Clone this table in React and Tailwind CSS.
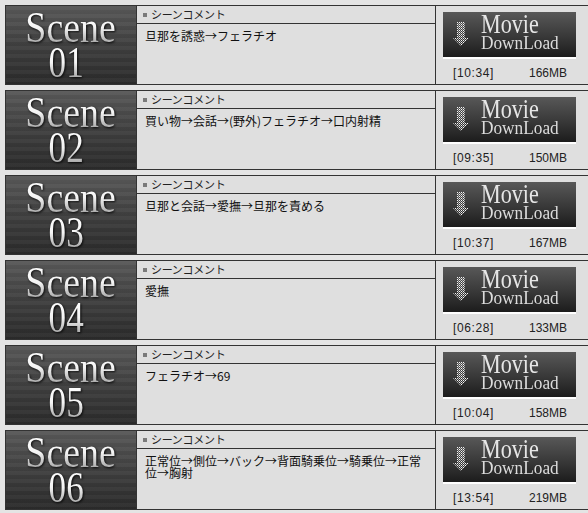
import React from 'react';

const scenes = [
    { no: '01', comment: '旦那を誘惑→フェラチオ', time: '10:34', size: '166MB' },
    { no: '02', comment: '買い物→会話→(野外)フェラチオ→口内射精', time: '09:35', size: '150MB' },
    { no: '03', comment: '旦那と会話→愛撫→旦那を責める', time: '10:37', size: '167MB' },
    { no: '04', comment: '愛撫', time: '06:28', size: '133MB' },
    { no: '05', comment: 'フェラチオ→69', time: '10:04', size: '158MB' },
    { no: '06', comment: '正常位→側位→バック→背面騎乗位→騎乗位→正常位→胸射', time: '13:54', size: '219MB' },
];

const DownArrow = ({ id }) => (
    <svg width="16" height="24" viewBox="0 0 16 24" className="shrink-0">
        <defs>
            <pattern id={id} width="2" height="2" patternUnits="userSpaceOnUse">
                <rect width="1" height="1" fill="#f4f4f4" />
                <rect x="1" y="1" width="1" height="1" fill="#b0b0b0" />
            </pattern>
        </defs>
        <rect x="4" y="0" width="8" height="16" fill={`url(#${id})`} />
        <polygon points="0,16 16,16 8,24" fill={`url(#${id})`} />
    </svg>
);

const SceneRow = ({ scene }) => {
    return (
        <div className="flex h-[80px] w-[584px] border border-[#333] bg-[#dfdfdf] mb-[5px]">
            {/* scene title panel */}
            <div className="w-[130px] shrink-0 bg-[repeating-linear-gradient(to_bottom,rgba(255,255,255,0.03)_0px,rgba(255,255,255,0.03)_4px,rgba(0,0,0,0.04)_4px,rgba(0,0,0,0.04)_8px),linear-gradient(to_bottom,#595959,#3e3e3e_55%,#2b2b2b)] pt-[4px] flex flex-col items-center font-['Liberation_Serif',serif] text-[44px] leading-[35px]">
                <span className="scale-x-[0.86] bg-gradient-to-b from-white via-[#f4f4f4] to-[#a0a0a0] bg-clip-text text-transparent drop-shadow-[1px_1px_1px_rgba(0,0,0,0.9)]">
                    Scene
                </span>
                <span className="scale-x-[0.8] bg-gradient-to-b from-white via-[#f4f4f4] to-[#a0a0a0] bg-clip-text text-transparent drop-shadow-[1px_1px_1px_rgba(0,0,0,0.9)] pr-[12px]">
                    {scene.no}
                </span>
            </div>

            {/* comment */}
            <div className="w-[300px] shrink-0 border-l border-r border-[#333] flex flex-col">
                <div className="h-[18px] border-b border-[#333] flex items-center pl-[6px] text-[11px] text-[#222] tracking-[-0.3px] font-['Noto_Sans_CJK_JP',sans-serif]">
                    <span className="w-[4px] h-[4px] bg-[#7a7a7a] mr-[4px]" />
                    シーンコメント
                </div>
                <div className="pl-[8px] pr-[12px] pt-[6px] text-[12px] leading-[12px] text-[#111] font-['Noto_Sans_CJK_JP',sans-serif]">
                    {scene.comment}
                </div>
            </div>

            {/* download */}
            <div className="flex-1 pt-[6px] pl-[7px] pr-[4px]">
                <div className="w-[133px] h-[47px] border-b-2 border-white bg-[linear-gradient(to_bottom,#585858,#383838_55%,#1c1c1c)] flex items-start">
                    <div className="ml-[10px] mt-[10px]">
                        <DownArrow id={`dots-${scene.no}`} />
                    </div>
                    <div className="ml-[12px] flex flex-col font-['Liberation_Serif',serif] text-[#e6e6e6]">
                        <span className="pt-[2px] text-[27px] leading-[20px] scale-x-[0.82] origin-left">Movie</span>
                        <span className="mt-[1px] text-[18px] leading-[17px] scale-x-[0.96] origin-left text-[#dcdcdc]">DownLoad</span>
                    </div>
                </div>
                <div className="w-[133px] mt-[8px] pl-[10px] pr-[9px] flex justify-between text-[12px] leading-[12px] text-[#222] font-['Liberation_Sans',sans-serif]">
                    <span className="tracking-[0.6px]">[{scene.time}]</span>
                    <span>{scene.size}</span>
                </div>
            </div>
        </div>
    );
};

const App = () => {
    return (
        <div className="w-[588px] h-[513px] overflow-hidden bg-[#e4e4e4] pt-[5px] pl-[5px]">
            {scenes.map((scene) => (
                <SceneRow key={scene.no} scene={scene} />
            ))}
        </div>
    );
};

export default App;
